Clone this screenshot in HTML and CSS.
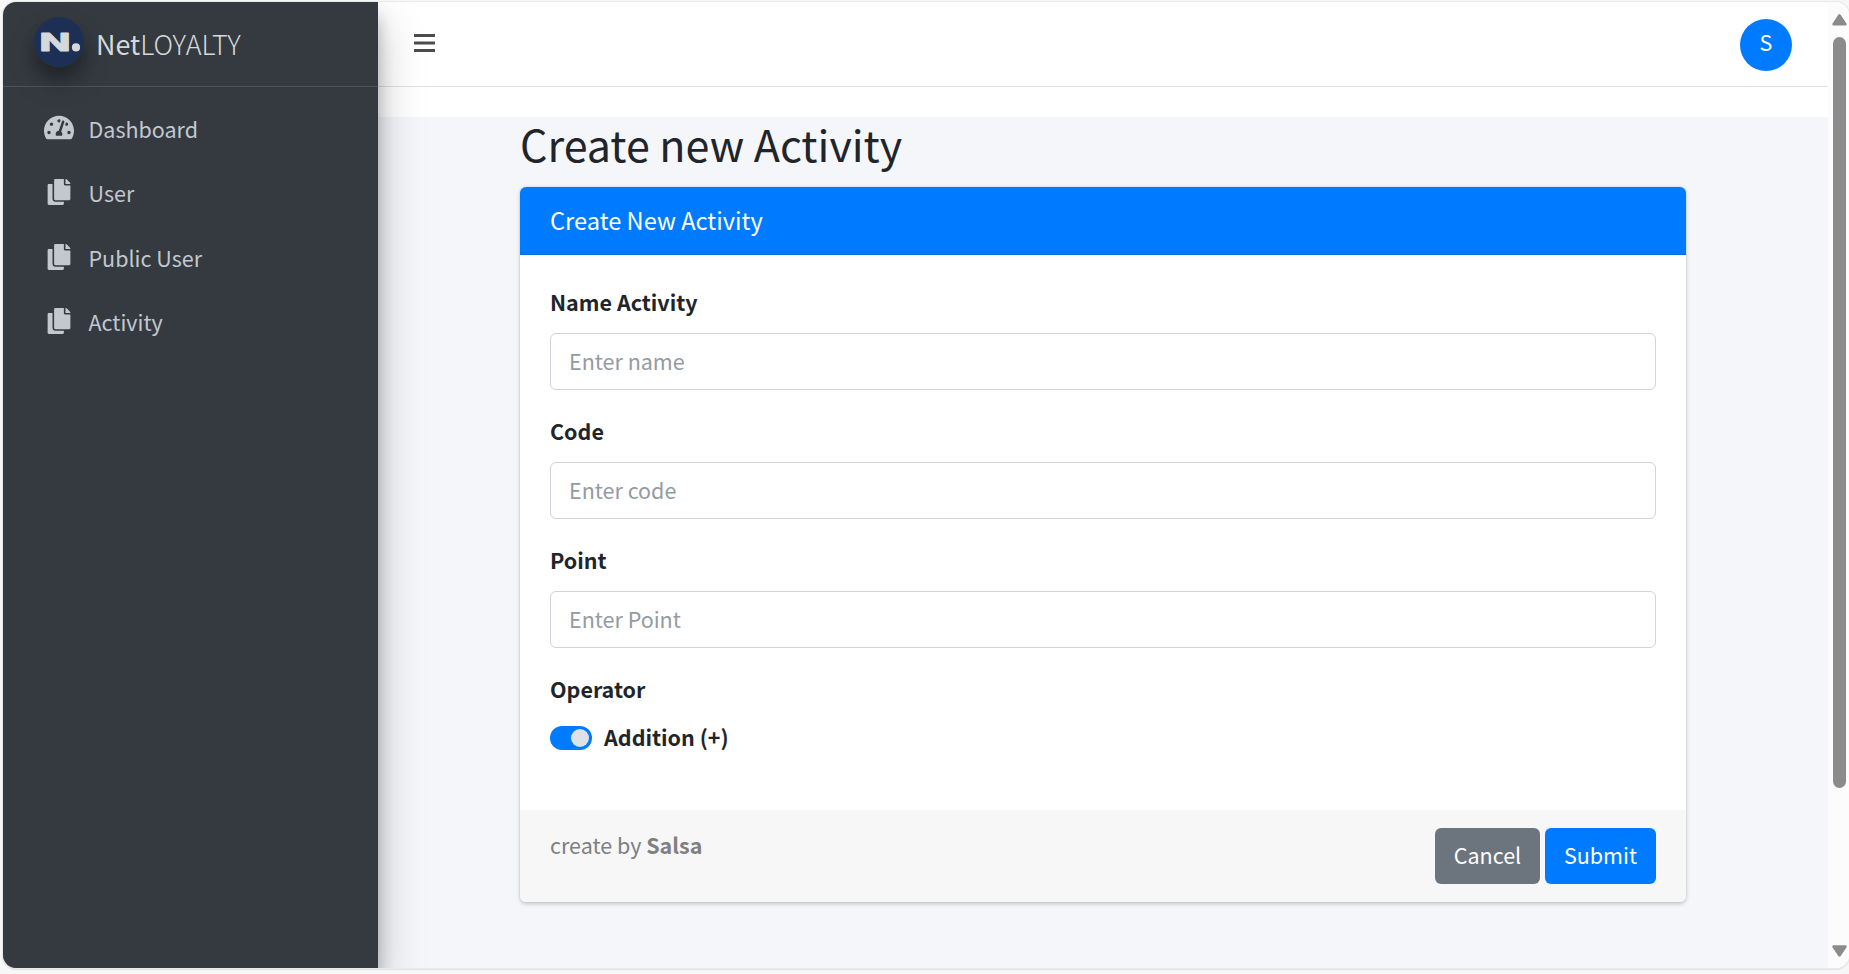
FILE: index.html
```html
<!DOCTYPE html>
<html lang="en">
<head>
<meta charset="utf-8">
<title>Create new Activity</title>
<link rel="stylesheet" href="styles.css">
</head>
<body>
<svg class="defs" width="0" height="0">
  <symbol id="copy" viewBox="0 0 448 512"><path d="M320 448v40c0 13.255-10.745 24-24 24H24c-13.255 0-24-10.745-24-24V120c0-13.255 10.745-24 24-24h72v296c0 30.879 25.121 56 56 56h168zm0-344V0H152c-13.255 0-24 10.745-24 24v368c0 13.255 10.745 24 24 24h272c13.255 0 24-10.745 24-24V128H344c-13.2 0-24-10.8-24-24zm120.971-31.029L375.029 7.029A24 24 0 0 0 358.059 0H352v96h96v-6.059a24 24 0 0 0-7.029-16.97z"/></symbol>
</svg>
<div class="window">
  <aside class="sidebar">
    <a class="brand">
      <svg class="logo" viewBox="0 0 50 50"><circle cx="25" cy="25" r="25" fill="#1e2f55"/><text class="logo-n" x="5.6" y="33.5" textLength="31" lengthAdjust="spacingAndGlyphs">N</text><circle cx="42" cy="30.4" r="4.1" fill="#d6d9db"/></svg>
      <span class="brand-text">Net<span class="brand-light">LOYALTY</span></span>
    </a>
    <nav class="nav">
      <a class="nav-item"><span class="nav-icon"><svg width="30" height="27" viewBox="0 0 576 512"><path d="M288 32C128.94 32 0 160.94 0 320c0 52.8 14.25 102.26 39.06 144.8 5.61 9.62 16.3 15.2 27.44 15.2h443c11.14 0 21.83-5.58 27.44-15.2C561.75 422.26 576 372.8 576 320c0-159.06-128.94-288-288-288zm0 64c14.71 0 26.58 10.13 30.32 23.65-1.11 2.26-2.64 4.23-3.45 6.67l-9.22 27.67c-5.13 3.49-10.97 6.01-17.64 6.01-17.67 0-32-14.33-32-32S270.33 96 288 96zM96 384c-17.67 0-32-14.33-32-32s14.33-32 32-32 32 14.33 32 32-14.33 32-32 32zm48-160c-17.67 0-32-14.33-32-32s14.33-32 32-32 32 14.33 32 32-14.33 32-32 32zm246.77-72.41l-61.33 184C343.13 347.33 352 364.54 352 384c0 11.72-3.38 22.55-8.88 32H232.88c-5.5-9.45-8.88-20.28-8.88-32 0-33.94 26.5-61.43 59.9-63.59l61.34-184.01c4.17-12.56 17.73-19.45 30.36-15.17 12.57 4.19 19.35 17.79 15.17 30.36zm14.66 57.2l15.52-46.55c3.47-1.29 7.13-2.23 11.05-2.23 17.67 0 32 14.33 32 32s-14.33 32-32 32c-11.38-.01-20.89-6.28-26.57-15.22zM480 384c-17.67 0-32-14.33-32-32s14.33-32 32-32 32 14.33 32 32-14.33 32-32 32z"/></svg></span>Dashboard</a>
      <a class="nav-item"><span class="nav-icon"><svg width="24" height="26"><use href="#copy"/></svg></span>User</a>
      <a class="nav-item"><span class="nav-icon"><svg width="24" height="26"><use href="#copy"/></svg></span>Public User</a>
      <a class="nav-item"><span class="nav-icon"><svg width="24" height="26"><use href="#copy"/></svg></span>Activity</a>
    </nav>
  </aside>
  <div class="page">
    <header class="topbar">
      <svg class="menu" width="21" height="18" viewBox="0 0 21 18"><path d="M0 0h21v3H0zM0 7.6h21v3H0zM0 15h21v3H0z"/></svg>
      <span class="avatar">S</span>
    </header>
    <div class="strip"></div>
    <main class="content">
      <h1 class="title">Create new Activity</h1>
      <form class="card">
        <div class="card-header">Create New Activity</div>
        <div class="card-body">
          <div class="field"><label class="label">Name Activity</label><input class="input" placeholder="Enter name"></div>
          <div class="field"><label class="label">Code</label><input class="input" placeholder="Enter code"></div>
          <div class="field"><label class="label">Point</label><input class="input" placeholder="Enter Point"></div>
          <div class="field"><span class="label">Operator</span><div class="switch-row"><span class="switch"></span><span class="switch-text">Addition (+)</span></div></div>
        </div>
        <div class="card-footer">
          <span class="credit">create by <b>Salsa</b></span>
          <div class="actions"><button type="button" class="btn btn-gray">Cancel</button><button type="button" class="btn btn-blue">Submit</button></div>
        </div>
      </form>
    </main>
  </div>
  <div class="scrollbar">
    <svg width="15" height="12" viewBox="0 0 15 12"><path d="M7.5 1.6 13.3 10.2H1.7z"/></svg>
    <span class="thumb"></span>
    <svg width="15" height="12" viewBox="0 0 15 12"><path d="M7.5 10.2 1.7 1.6h11.6z"/></svg>
  </div>
</div>
</body>
</html>
```
FILE: styles.css
```css
* { box-sizing: border-box; }
body {
  margin: 0;
  height: 974px;
  padding: 2px 0 6px 3px;
  overflow: hidden;
  background: #f7f7f7;
  font-family: "Noto Sans CJK SC", "Noto Sans", sans-serif;
  font-size: 21.5px;
  line-height: 36px;
  color: #212529;
}
.defs { position: absolute; }
.window {
  display: flex;
  height: 966px;
  border-radius: 13px;
  overflow: hidden;
  background: #f4f6f9;
  box-shadow: 0 0 0 1px #e9e9e9, 0 1px 1px 1px #e0e2e2;
}
.sidebar {
  position: relative;
  z-index: 1;
  width: 375px;
  flex: none;
  background: #343a40;
  color: #c2c7d0;
  box-shadow: 0 21px 42px rgba(0,0,0,.25), 0 15px 15px rgba(0,0,0,.22);
}
.brand {
  display: flex;
  height: 85px;
  padding: 15px 0 0 31px;
  gap: 12px;
  border-bottom: 1px solid #4b545c;
}
.logo {
  width: 50px;
  height: 50px;
  border-radius: 50%;
  box-shadow: 0 15px 30px rgba(0,0,0,.19), 0 12px 14px rgba(0,0,0,.23);
}
.logo-n {
  font: 800 25px Inter, sans-serif;
  fill: #d6d9db;
  stroke: #d6d9db;
  stroke-width: .8;
  stroke-linejoin: round;
}
.brand-text { font-size: 26.9px; line-height: 45px; margin-top: 4px; color: #d6d8d9; }
.brand-light { font-weight: 300; }
.nav { padding: 9.5px 0 0 39px; }
.nav-item { display: flex; align-items: center; height: 64.5px; }
.nav-icon { display: flex; justify-content: center; width: 34px; margin: -2px 12.5px 0 0; }
.nav-icon svg { fill: #c2c7d0; }
.page { flex: 1; min-width: 0; }
.topbar {
  display: flex;
  justify-content: space-between;
  height: 85px;
  padding: 17px 36px 0 36px;
  background: #fff;
  border-bottom: 1px solid #dee2e6;
}
.menu { margin-top: 15px; fill: #4c4c4c; }
.avatar {
  width: 52px;
  height: 52px;
  border-radius: 50%;
  background: #007bff;
  color: #fff;
  text-align: center;
  line-height: 46px;
}
.strip { height: 30px; background: #fff; }
.content { padding: 0 142px; }
.title { margin: 0; height: 70px; font-size: 43px; font-weight: 400; line-height: 52px; }
.card {
  height: 715px;
  border-radius: 6px;
  background: #fff;
  box-shadow: 0 0 1.5px rgba(0,0,0,.125), 0 1.5px 4.5px rgba(0,0,0,.2);
  overflow: hidden;
}
.card-header {
  height: 68px;
  padding: 15px 30px;
  background: #007bff;
  border-bottom: 1px solid #006fe6;
  color: #fff;
  font-size: 23.65px;
}
.card-body { height: 555px; padding: 30px; }
.field { margin-bottom: 24px; }
.label { display: block; height: 48px; font-weight: 700; line-height: 34px; }
.input {
  display: block;
  width: 100%;
  height: 57px;
  padding: 0 18px 2px;
  border: 1px solid #ced4da;
  border-radius: 6px;
  background: #fff;
  font: inherit;
  color: #495057;
}
.input::placeholder { color: #939ba2; opacity: 1; }
.switch-row { display: flex; align-items: center; height: 36px; gap: 12px; font-weight: 700; }
.switch-text { padding-bottom: 2px; }
.switch {
  display: flex;
  justify-content: flex-end;
  width: 42px;
  height: 24px;
  padding: 3px;
  border-radius: 12px;
  background: #007bff;
}
.switch::after { content: ""; width: 18px; height: 18px; border-radius: 50%; background: #dee2e6; }
.card-footer {
  display: flex;
  justify-content: space-between;
  height: 92px;
  padding: 18px 30px;
  background: #f7f7f7;
}
.credit { color: #808080; line-height: 34px; }
.actions { display: flex; gap: 5px; }
.btn {
  height: 56px;
  padding: 0 0 2px;
  border: 0;
  border-radius: 6px;
  color: #fff;
  font: inherit;
}
.btn-gray { width: 105px; background: #6c757d; }
.btn-blue { width: 111px; background: #007bff; }
.scrollbar {
  display: flex;
  flex-direction: column;
  align-items: center;
  width: 21px;
  flex: none;
  padding: 12px 0 11px 2px;
  background: #fcfcfc;
}
.scrollbar svg { fill: #8b8b8b; stroke: #8b8b8b; stroke-width: 2.8; stroke-linejoin: round; }
.thumb { width: 13px; height: 751px; margin: 11px 0 auto; border-radius: 7px; background: #8b8b8b; }
```
